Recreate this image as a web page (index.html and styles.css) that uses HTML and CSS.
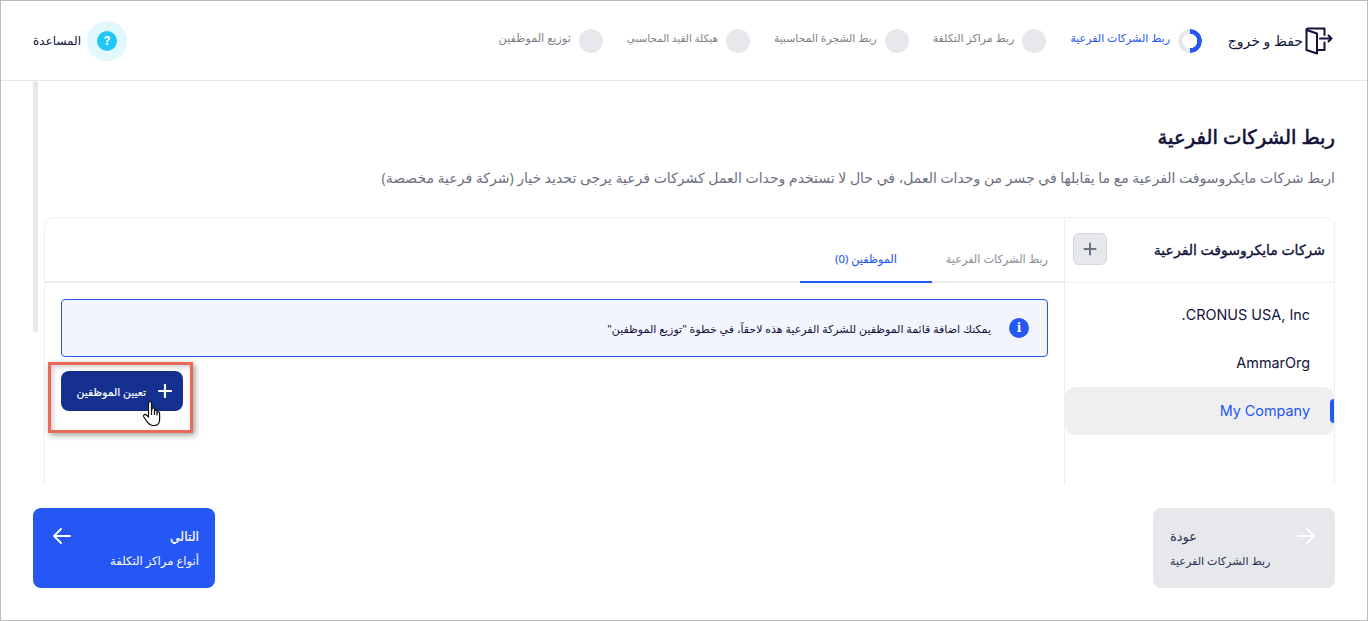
FILE: index.html
```html
<!DOCTYPE html>
<html lang="ar" dir="rtl">
<head>
<meta charset="utf-8">
<title>ربط الشركات الفرعية</title>
<link rel="stylesheet" href="styles.css">
</head>
<body>
<div class="app">
  <header class="topbar">
    <a class="save-exit">
      <svg class="exit-icon" width="28" height="28" viewBox="0 0 28 28" fill="none" stroke="#12123a" stroke-width="2" stroke-linejoin="round" stroke-linecap="round"><path d="M1.5 3 12 6.5V26.5L1.5 23V3Z"/><path d="M1.5 2.5Q1.5 1.5 3 1.5H19.5V8M19.5 15.5V23H12.5"/><path d="M15 11.5H26.5M23.5 8.5 26.5 11.5 23.5 14.5"/></svg>
      <span>حفظ و خروج</span>
    </a>
    <ol class="steps">
      <li class="step active"><span class="ring"></span><span class="step-label">ربط الشركات الفرعية</span></li>
      <li class="step"><span class="dot"></span><span class="step-label">ربط مراكز التكلفة</span></li>
      <li class="step"><span class="dot"></span><span class="step-label step-label-tree">ربط الشجرة المحاسبية</span></li>
      <li class="step"><span class="dot"></span><span class="step-label step-label-entry">هيكلة القيد المحاسبي</span></li>
      <li class="step"><span class="dot"></span><span class="step-label step-label-staff">توزيع الموظفين</span></li>
    </ol>
    <a class="help">
      <span class="help-halo"><span class="help-mark">?</span></span>
      <span>المساعدة</span>
    </a>
  </header>

  <main class="content">
    <div class="scrollbar"></div>
    <h1 class="title">ربط الشركات الفرعية</h1>
    <p class="desc">اربط شركات مايكروسوفت الفرعية مع ما يقابلها في جسر من وحدات العمل، في حال لا تستخدم وحدات العمل كشركات فرعية يرجى تحديد خيار (شركة فرعية مخصصة)</p>

    <section class="panel">
      <aside class="side">
        <div class="side-head">
          <h2>شركات مايكروسوفت الفرعية</h2>
          <button class="add-btn">
            <svg width="14" height="14" viewBox="0 0 14 14" stroke="#6b7280" stroke-width="2" stroke-linecap="round"><path d="M7 1.5V12.5M1.5 7H12.5"/></svg>
          </button>
        </div>
        <ul class="side-list">
          <li>CRONUS USA, Inc.</li>
          <li>AmmarOrg</li>
          <li class="selected">My Company</li>
        </ul>
      </aside>
      <div class="pane">
        <div class="tabs">
          <span class="tab">ربط الشركات الفرعية</span>
          <span class="tab current">الموظفين (0)</span>
        </div>
        <div class="pane-body">
          <div class="notice">
            <span class="info-icon">i</span>
            <span>يمكنك اضافة قائمة الموظفين للشركة الفرعية هذه لاحقاً، في خطوة "توزيع الموظفين"</span>
          </div>
          <div class="assign-row">
            <button class="assign-btn">
              <svg width="14" height="14" viewBox="0 0 14 14" stroke="#fff" stroke-width="2.2" stroke-linecap="round"><path d="M7 1V13M1 7H13"/></svg>
              <span>تعيين الموظفين</span>
            </button>
            <span class="highlight"></span>
            <svg class="cursor" width="22" height="28" viewBox="0 0 22 28" fill="#fff" stroke="#111" stroke-width="1.2" stroke-linejoin="round"><path d="M6.5 15V3.2C6.5 1 9.5 1 9.5 3.2V11L10 8.8C10.5 7.4 12.5 7.6 12.5 9.2V11.2C13 9.8 15 10 15 11.6V12.6C15.6 11.4 17.6 11.6 17.6 13.2V19.5C17.6 23 16 25.5 12.5 25.5H10.5C8 25.5 7 24.4 5.6 22.4L1.8 17C0.8 15.2 3 13.6 4.4 15L6.5 17Z"/><path d="M9.5 11V15M12.5 11V15M15 12.5V15.5" fill="none"/></svg>
          </div>
        </div>
      </div>
    </section>
  </main>

  <footer class="footer">
    <a class="nav-btn back">
      <div class="nav-text">
        <strong>عودة</strong>
        <span>ربط الشركات الفرعية</span>
      </div>
      <svg class="arrow" width="18" height="16" viewBox="0 0 18 16" fill="none" stroke="#fff" stroke-width="1.8" stroke-linecap="round" stroke-linejoin="round"><path d="M1 8H17M10 1 17 8 10 15"/></svg>
    </a>
    <a class="nav-btn next">
      <div class="nav-text">
        <strong>التالي</strong>
        <span>أنواع مراكز التكلفة</span>
      </div>
      <svg class="arrow" width="18" height="16" viewBox="0 0 18 16" fill="none" stroke="#fff" stroke-width="1.8" stroke-linecap="round" stroke-linejoin="round"><path d="M17 8H1M8 1 1 8 8 15"/></svg>
    </a>
  </footer>
</div>
</body>
</html>
```

FILE: styles.css
```css
* { box-sizing: border-box; }
html, body { margin: 0; height: 100%; }
body {
  font-family: "Noto Sans", "Inter", "DejaVu Sans", sans-serif;
  color: #12123a;
  background: #fff;
  overflow: hidden;
}
ol, ul { list-style: none; margin: 0; padding: 0; }
h1, h2, p { margin: 0; }
.app {
  width: 1368px;
  height: 621px;
  border: 1px solid #bdbdbd;
  display: flex;
  flex-direction: column;
  overflow: hidden;
  background: #fff;
}
.topbar {
  flex: 0 0 80px;
  height: 80px;
  border-bottom: 1px solid #e6e8ec;
  display: flex;
  align-items: center;
  padding: 0 34px 0 32px;
}
.save-exit {
  display: flex;
  align-items: center;
  gap: 2px;
  font-size: 14px;
  width: 106px;
  white-space: nowrap;
}
.steps {
  display: flex;
  align-items: center;
  gap: 24px;
  margin-right: 25px;
}
.step {
  display: flex;
  align-items: center;
  gap: 8px;
  font-size: 11px;
  color: #7d8088;
  white-space: nowrap;
}
.step.active { color: #2557f5; }
.step-label { position: relative; top: -3px; }
.step-label-tree { font-size: 10.8px; }
.step-label-entry { font-size: 10.4px; }
.step-label-staff { font-size: 11.3px; }
.dot, .ring {
  width: 24px;
  height: 24px;
  border-radius: 50%;
  flex: none;
}
.dot { background: #e6e8ec; }
.ring {
  background: conic-gradient(#2557f5 0 50%, #e6e8ec 50% 100%);
  -webkit-mask: radial-gradient(circle, transparent 7px, #000 7.5px);
  mask: radial-gradient(circle, transparent 7px, #000 7.5px);
}
.help {
  margin-right: auto;
  display: flex;
  align-items: center;
  gap: 6px;
  font-size: 12px;
}
.help-halo {
  width: 40px;
  height: 40px;
  border-radius: 50%;
  background: #e3f8fe;
  display: flex;
  align-items: center;
  justify-content: center;
}
.help-mark {
  width: 20px;
  height: 20px;
  border-radius: 50%;
  background: #1fc8f5;
  color: #fff;
  font: 700 12px/20px "Inter", sans-serif;
  text-align: center;
}
.content {
  flex: 1;
  min-height: 0;
  position: relative;
  overflow: hidden;
  padding: 42px 32px 0 32px;
}
.scrollbar {
  position: absolute;
  left: 32px;
  top: 0;
  width: 5px;
  height: 251px;
  background: #e6e8ee;
  border-radius: 3px;
}
.title {
  font-size: 19.6px;
  font-weight: 400;
  -webkit-text-stroke: 0.6px #12123a;
  line-height: 28px;
  color: #12123a;
}
.desc {
  margin-top: 17px;
  font-size: 14px;
  line-height: 20px;
  color: #6d6f80;
  white-space: nowrap;
}
.panel {
  margin: 29px 0 0 11px;
  height: 320px;
  border: 1px solid #eceef1;
  border-radius: 10px;
  display: flex;
}
.side {
  width: 270px;
  flex: none;
  border-left: 1px solid #eceef1;
}
.side-head {
  height: 65px;
  border-bottom: 1px solid #eceef1;
  display: flex;
  align-items: center;
  justify-content: space-between;
  padding: 0 9px 2px 8px;
}
.side-head h2 {
  font-size: 14px;
  font-weight: 400;
  -webkit-text-stroke: 0.35px #12123a;
  color: #12123a;
}
.add-btn {
  width: 34px;
  height: 32px;
  background: #e6e8ec;
  border: 1px solid #d5d8de;
  border-radius: 6px;
  padding: 0;
  display: flex;
  align-items: center;
  justify-content: center;
}
.side-list { padding-top: 8px; }
.side-list li {
  height: 48px;
  display: flex;
  align-items: center;
  padding: 0 24px 2px 0;
  font: 14.4px "Inter", sans-serif;
  color: #12123a;
  position: relative;
}
.side-list li.selected {
  background: #efeff1;
  border-radius: 10px;
  color: #2557f5;
}
.side-list li.selected::before {
  content: "";
  position: absolute;
  right: 0;
  top: 12px;
  width: 4px;
  height: 24px;
  background: #2557f5;
  border-radius: 4px 0 0 4px;
}
.pane { flex: 1; min-width: 0; }
.tabs {
  height: 65px;
  border-bottom: 2px solid #eeeff1;
  display: flex;
  align-items: flex-end;
}
.tab {
  width: 132px;
  height: 65px;
  padding: 33px 16px 0 0;
  font-size: 11.3px;
  color: #8a8c95;
  white-space: nowrap;
  text-align: right;
  margin-bottom: -2px;
}
.tab.current {
  color: #2557f5;
  border-bottom: 2px solid #2557f5;
  text-align: center;
  padding: 33px 0 0 0;
  -webkit-text-stroke: 0.1px #2557f5;
}
.pane-body { padding: 16px 16px 0 16px; }
.notice {
  height: 58px;
  background: #f2f5fe;
  border: 1px solid #2557f5;
  border-radius: 4px;
  display: flex;
  align-items: center;
  gap: 18px;
  padding: 0 18px;
  font-size: 11px;
  color: #12123a;
}
.info-icon {
  width: 20px;
  height: 20px;
  border-radius: 50%;
  background: #2557f5;
  color: #fff;
  font: 700 12px/20px "DejaVu Serif", serif;
  text-align: center;
  flex: none;
}
.assign-row {
  position: relative;
  margin-top: 14px;
  display: flex;
  justify-content: flex-end;
}
.assign-btn {
  width: 122px;
  height: 40px;
  background: #15308f;
  color: #fff;
  border: 0;
  border-radius: 8px;
  display: flex;
  align-items: center;
  gap: 12px;
  padding: 0 11px 0 0;
  font: 400 10.8px "Noto Sans", "DejaVu Sans", sans-serif;
  -webkit-text-stroke: 0.2px #fff;
  white-space: nowrap;
}
.highlight {
  position: absolute;
  left: -13px;
  top: -9px;
  width: 145px;
  height: 71px;
  border: 3px solid #ea6a5a;
  box-shadow: 2px 2px 6px rgba(0, 0, 0, 0.4), inset 2px 2px 5px rgba(0, 0, 0, 0.2);
}
.cursor {
  position: absolute;
  left: 81px;
  top: 29px;
}
.footer {
  flex: 0 0 135px;
  display: flex;
  justify-content: space-between;
  align-items: flex-start;
  padding: 23px 32px 0 32px;
}
.nav-btn {
  width: 182px;
  height: 80px;
  border-radius: 8px;
  display: flex;
  justify-content: space-between;
  padding: 20px 16px 0 20px;
  white-space: nowrap;
}
.nav-text {
  display: flex;
  flex-direction: column;
  gap: 7px;
  font-size: 11.6px;
  line-height: 17px;
}
.nav-text strong { font-weight: 400; font-size: 12.5px; -webkit-text-stroke: 0.2px currentColor; }
.back {
  background: #e6e8ec;
  color: #2b3350;
  flex-direction: row-reverse;
  padding: 20px 20px 0 17px;
}
.back .nav-text { align-items: flex-end; font-size: 11.1px; }
.back .nav-text strong { font-size: 13px; -webkit-text-stroke: 0; }
.next {
  background: #2557f5;
  color: #fff;
}
```
